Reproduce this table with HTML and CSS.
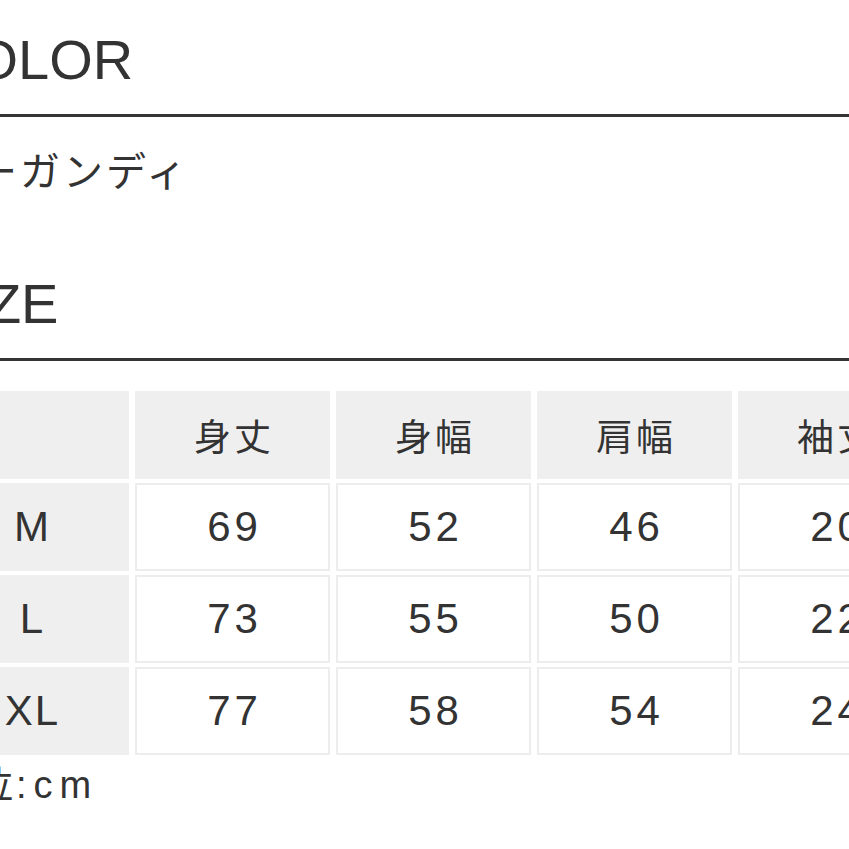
FILE: index.html
```html
<!DOCTYPE html>
<html lang="ja">
<head>
<meta charset="utf-8">
<title>COLOR / SIZE</title>
<link rel="stylesheet" href="styles.css">
</head>
<body>
<main class="page">
  <section class="block">
    <h2 class="heading">COLOR</h2>
    <p class="value">バーガンディ</p>
  </section>
  <section class="block">
    <h2 class="heading heading-size">SIZE</h2>
    <div class="size-table">
      <div class="cell head"></div>
      <div class="cell head jp">身丈</div>
      <div class="cell head jp">身幅</div>
      <div class="cell head jp">肩幅</div>
      <div class="cell head jp">袖丈</div>
      <div class="cell head jp">着丈</div>

      <div class="cell label">M</div>
      <div class="cell num">69</div>
      <div class="cell num">52</div>
      <div class="cell num">46</div>
      <div class="cell num">20</div>
      <div class="cell num">70</div>

      <div class="cell label">L</div>
      <div class="cell num">73</div>
      <div class="cell num">55</div>
      <div class="cell num">50</div>
      <div class="cell num">22</div>
      <div class="cell num">74</div>

      <div class="cell label">XL</div>
      <div class="cell num">77</div>
      <div class="cell num">58</div>
      <div class="cell num">54</div>
      <div class="cell num">24</div>
      <div class="cell num">78</div>
    </div>
    <p class="unit">単位<span class="unit-latin">:cm</span></p>
  </section>
</main>
</body>
</html>
```

FILE: styles.css
```css
html, body {
  margin: 0;
  padding: 0;
  background: #ffffff;
  overflow: hidden;
}

body {
  width: 849px;
  height: 849px;
  color: #333333;
  font-family: "Liberation Sans", "Noto Sans CJK JP", sans-serif;
}

.page {
  margin-left: -66px;
  width: 1260px;
  padding-top: 32px;
}

.heading {
  margin: 0;
  font-size: 56px;
  line-height: 56px;
  font-weight: 400;
  letter-spacing: 0;
  padding-bottom: 26px;
  border-bottom: 3px solid #353535;
}

.value {
  margin: 32px 0 0;
  font-family: "Noto Sans CJK JP", sans-serif;
  font-size: 40px;
  line-height: 40px;
  letter-spacing: 3px;
}

.heading-size {
  margin-top: 87px;
}

.size-table {
  margin-top: 30px;
  display: grid;
  grid-template-columns: repeat(6, 195px);
  grid-auto-rows: 88px;
  column-gap: 6px;
  row-gap: 4px;
}

.cell {
  box-sizing: border-box;
  display: flex;
  align-items: center;
  justify-content: center;
  border: 2px solid #ededed;
  background: #ffffff;
  line-height: 1;
}

.head,
.label {
  background: #efefef;
  border-color: #efefef;
}

.jp {
  font-family: "Noto Sans CJK JP", sans-serif;
  font-size: 37px;
  letter-spacing: 3px;
  padding-left: 3px;
}

.num,
.label {
  font-size: 42px;
  letter-spacing: 4px;
  padding-left: 4px;
}

.label {
  letter-spacing: 2px;
  padding-left: 2px;
}

.unit {
  margin: 11px 0 0;
  font-size: 38px;
  line-height: 38px;
  letter-spacing: 3px;
}

.unit-latin {
  letter-spacing: 7px;
}
```
